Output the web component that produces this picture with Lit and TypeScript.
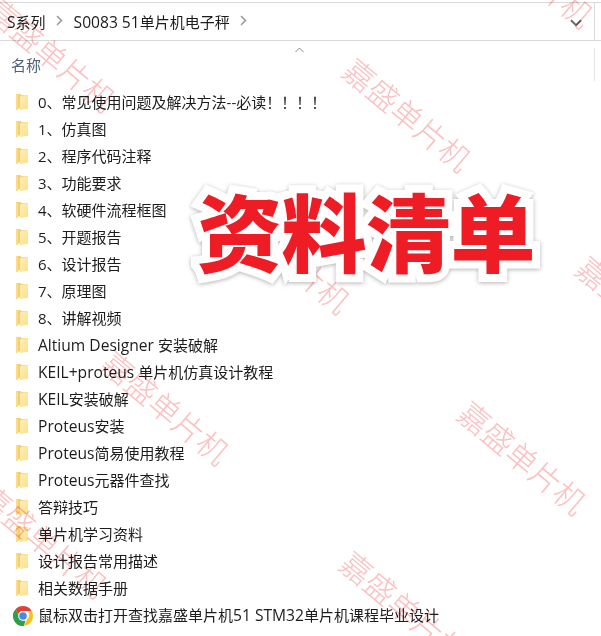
import { LitElement, html, css, svg } from "lit";
import { customElement } from "lit/decorators.js";

const folders = [
  "0、常见使用问题及解决方法--必读！！！！",
  "1、仿真图",
  "2、程序代码注释",
  "3、功能要求",
  "4、软硬件流程框图",
  "5、开题报告",
  "6、设计报告",
  "7、原理图",
  "8、讲解视频",
  "Altium Designer 安装破解",
  "KEIL+proteus 单片机仿真设计教程",
  "KEIL安装破解",
  "Proteus安装",
  "Proteus简易使用教程",
  "Proteus元器件查找",
  "答辩技巧",
  "单片机学习资料",
  "设计报告常用描述",
  "相关数据手册",
];

const marks: [number, number][] = [
  [52, 54], [530, -30], [408, 114], [287, 256], [641, 312], [166, 407], [523, 457], [44, 540], [405, 607],
];

/* Latin runs are set slightly larger so their widths match the reference's UI face. */
const runs = (text: string) =>
  text.split(/([A-Za-z][A-Za-z0-9+ ]*[A-Za-z0-9 ]|\d{2,})/).map((part, i) =>
    i % 2 ? html`<span class="lat">${part}</span>` : part
  );

const folderIcon = svg`<svg class="ficon" width="14" height="18" viewBox="0 0 14 18">
  <defs><linearGradient id="fg" x1="0" y1="0" x2="1" y2="1">
    <stop offset="0" stop-color="#fdf0b8"/><stop offset="1" stop-color="#fcdf8a"/></linearGradient></defs>
  <path d="M1 1h4.5l1 1.2H13V15.5H1z" fill="#f6cf6c"/>
  <path d="M5 3.6 13 2.2V15.5l-8 1.7z" fill="url(#fg)"/>
  <path d="M1 1h2v16H1z" fill="#f9dc8e"/>
</svg>`;

const chromeIcon = svg`<svg width="20" height="20" viewBox="0 0 48 48">
  <path d="M24 0a24 24 0 0 1 20.8 12H24a12 12 0 0 0-11.4 8.2L6.2 7.8A24 24 0 0 1 24 0z" fill="#e34133"/>
  <path d="M44.8 12A24 24 0 0 1 26 47.9L35.2 30a12 12 0 0 0-.8-18z" fill="#fbc116"/>
  <path d="M6.2 7.8 16 25a12 12 0 0 0 14 10.2L26 47.9A24 24 0 0 1 6.2 7.8z" fill="#2fa04a"/>
  <circle cx="24" cy="24" r="11.6" fill="#fff"/>
  <circle cx="24" cy="24" r="9" fill="#4a87e8"/>
</svg>`;

@customElement("app-root")
export class AppRoot extends LitElement {
  static styles = css`
    :host {
      display: block;
      position: relative;
      width: 601px;
      height: 636px;
      overflow: hidden;
      background: #fff;
      font-family: "Open Sans", "Noto Sans CJK SC", sans-serif;
      font-size: 15px;
      color: #1c1c1c;
      padding-top: 2px;
      box-sizing: border-box;
    }
    .bar {
      display: flex;
      align-items: center;
      height: 37px;
      border-top: 1px solid #d9d9d9;
      border-bottom: 1px solid #d9d9d9;
      padding-left: 7px;
    }
    .crumb { white-space: nowrap; line-height: 20px; }
    .lat { font-size: 15.6px; }
    .sep { width: 28px; display: flex; justify-content: center; padding-bottom: 2px; }
    .spacer { flex: 1; }
    .drop { width: 24px; display: flex; justify-content: center; margin-right: 6px; padding-top: 2px; }
    .divider { width: 1px; align-self: stretch; background: #d9d9d9; margin-right: 6px; }
    .head {
      display: flex;
      align-items: center;
      height: 47px;
      padding-left: 11px;
      color: #4c607a;
      position: relative;
    }
    .caret { position: absolute; left: 295px; top: 6px; }
    .vline { position: absolute; left: 594px; top: 7px; height: 33px; width: 1px; background: #e5e5e5; }
    .list { display: flex; flex-direction: column; }
    .row { display: flex; align-items: center; height: 27px; white-space: nowrap; }
    .slot { width: 38px; padding-left: 15px; box-sizing: border-box; display: flex; align-items: center; flex: none; }
    .slot.chrome { padding-left: 13px; padding-top: 2px; }
    .ficon { display: block; }
    .marks { position: absolute; inset: 0; pointer-events: none; mix-blend-mode: multiply; }
    .mark {
      position: absolute;
      width: 180px;
      margin-left: -90px;
      margin-top: -20px;
      height: 40px;
      line-height: 40px;
      text-align: center;
      transform: rotate(40deg);
      font-family: "Noto Sans CJK SC", sans-serif;
      font-weight: 300;
      font-size: 31px;
      color: #fbc0c0;
      white-space: nowrap;
    }
    .title {
      position: absolute;
      left: 197px;
      top: 169px;
      font-family: "Noto Sans CJK SC", sans-serif;
      font-weight: 900;
      font-size: 85px;
      line-height: 120px;
      letter-spacing: -0.5px;
      color: #ee1c25;
      white-space: nowrap;
      -webkit-text-stroke: 16px #fff;
      paint-order: stroke fill;
      filter: drop-shadow(0 1px 2px rgba(0, 0, 0, 0.3));
    }
  `;

  render() {
    const chev = html`<svg width="9" height="13" viewBox="0 0 9 13"><path d="M2 2l4.5 4.5L2 11" fill="none" stroke="#9a9a9a" stroke-width="1.6"/></svg>`;
    return html`
      <div class="bar">
        <span class="crumb"><span class="lat">S</span>系列</span>
        <span class="sep">${chev}</span>
        <span class="crumb"><span class="lat">S0083 51</span>单片机电子秤</span>
        <span class="sep">${chev}</span>
        <span class="spacer"></span>
        <span class="drop"><svg width="12" height="8" viewBox="0 0 12 8"><path d="M1 1.2l5 5 5-5" fill="none" stroke="#6b6b6b" stroke-width="2"/></svg></span>
        <span class="divider"></span>
      </div>
      <div class="head">
        <svg class="caret" width="9" height="6" viewBox="0 0 9 6"><path d="M.5 5l4-4 4 4" fill="none" stroke="#8a8a8a"/></svg>
        名称
        <span class="vline"></span>
      </div>
      <div class="list">
        ${folders.map((f) => html`<div class="row"><span class="slot">${folderIcon}</span><span>${runs(f)}</span></div>`)}
        <div class="row"><span class="slot chrome">${chromeIcon}</span><span>鼠标双击打开查找嘉盛单片机<span class="lat">51 STM32</span>单片机课程毕业设计</span></div>
      </div>
      <div class="marks">
        ${marks.map(([x, y]) => html`<div class="mark" style="left:${x}px;top:${y}px">嘉盛单片机</div>`)}
      </div>
      <div class="title">资料清单</div>
    `;
  }
}
